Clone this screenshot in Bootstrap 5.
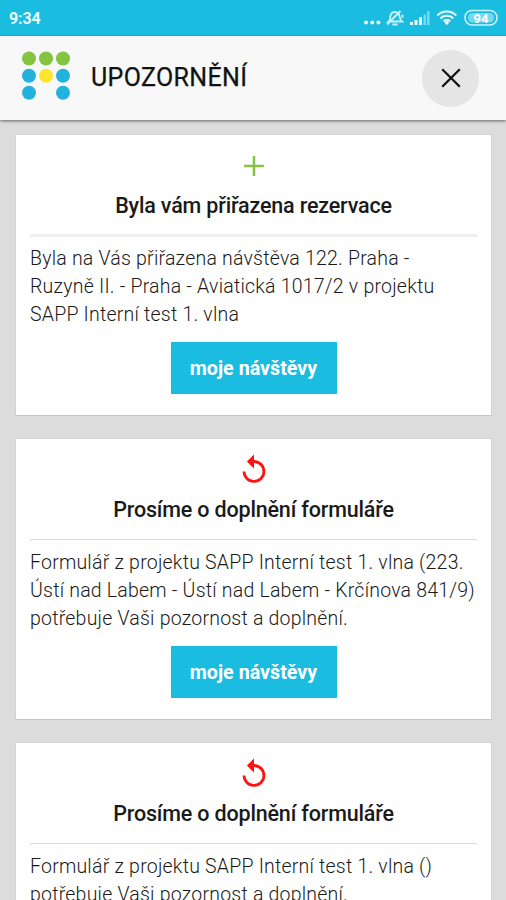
<!DOCTYPE html>
<html lang="cs">
<head>
<meta charset="utf-8">
<meta name="viewport" content="width=device-width, initial-scale=1">
<title>Upozornění</title>
<link href="https://cdn.jsdelivr.net/npm/bootstrap@5.3.0/dist/css/bootstrap.min.css" rel="stylesheet">
<style>
html, body { height: 100%; overflow: hidden; }
body { font-family: Roboto, "Noto Sans", sans-serif; background: #dcdcdc; color: #222; }
svg { display: block; flex: none; }
.status-bar { height: 36px; background: #1abce0; color: #e9fbff; padding: 0 8px 0 9px; }
.clock { font-size: 16px; font-weight: 700; line-height: 36px; letter-spacing: -.1px; padding-top: 1px; }
.app-header { height: 84px; background: #f8f8f8; padding: 0 27px 0 21px; box-shadow: 0 1px 3px rgba(0,0,0,.55); }
.app-title { font-size: 25px; font-weight: 400; line-height: 30px; color: #111; margin: 0 0 0 20px; letter-spacing: .35px; -webkit-text-stroke: .25px #111; }
.close-btn { width: 57px; height: 57px; background: #e5e5e5; color: #111; }
.screen { height: 100vh; overflow: hidden; }
.notices { padding: 14px 14px 0 15px; gap: 22px; }
.notice { height: 282px; flex: none; border: 1px solid #d2d2d2; border-bottom-color: #c6c6c6; border-radius: 0; padding: 14px 14px 0; }
.notice-title { font-size: 21.5px; font-weight: 500; line-height: 28px; color: #1a1a1a; margin: 9px 0 14px; white-space: nowrap; letter-spacing: -.17px; }
.rule { height: 3px; background: #efefef; margin-bottom: 8px; }
.rule-thin { height: 1px; background: #dcdcdc; margin: 1px 0 9px; }
.notice-text { font-size: 19.5px; font-weight: 300; line-height: 28px; color: #1a1a1a; margin: 0 0 13px; white-space: nowrap; letter-spacing: .22px; }
.visits-btn { width: 166px; height: 52px; background: #1abce0; border: 0; border-radius: 0; font-size: 19.7px; font-weight: 700; padding: 1px 0 0; }
.visits-btn:hover { background: #12a8ca; }
</style>
<script src="https://cdn.jsdelivr.net/npm/bootstrap@5.3.0/dist/js/bootstrap.bundle.min.js"></script>
</head>
<body>
<svg width="0" height="0" class="d-none">
  <symbol id="replay" viewBox="0 0 24 24"><path fill="#f11" d="M12 5V1L7 6l5 5V7c3.310 0 6 2.690 6 6s-2.690 6-6 6-6-2.690-6-6H4c0 4.420 3.580 8 8 8s8-3.580 8-8-3.580-8-8-8z"/></symbol>
  <symbol id="plus" viewBox="0 0 24 24"><path fill="#84c441" d="M19 12.900h-6.100V19h-1.800v-6.100H5v-1.800h6.100V5h1.800v6.100H19z"/></symbol>
</svg>
<div class="screen">
<div class="status-bar d-flex justify-content-between">
  <div class="clock">9:34</div>
  <svg width="138" height="36" viewBox="360 0 138 36" fill="none" stroke="#c9f3fc">
    <g fill="#e9fbff" stroke="none"><circle cx="366" cy="22.500" r="2"/><circle cx="372.200" cy="22.500" r="2"/><circle cx="378.400" cy="22.500" r="2"/></g>
    <g stroke-width="1.800">
      <path d="M388.500 21.500c1.800-1.500 1.500-3.500 2-6 1.500-5 8-4.500 9 .5 .3 2 .5 4 2.500 5.500zM392.500 24.500h5M387 24.500L400.500 11"/>
      <path d="M402.500 14.500v3.500"/>
    </g>
    <g fill="#e9fbff" stroke="none"><path d="M410 22h3v3h-3zM414.500 20h3v5h-3zM419 17h3v8h-3z"/><path fill="#76d9ef" d="M423.500 14.500h2.500V25h-2.500zM427 11h2.500v14H427z"/></g>
    <g stroke="#e9fbff" stroke-width="2"><path d="M437.300 15.500a13.300 13.300 0 0 1 19 0M440.300 18.500a9 9 0 0 1 13 0M443.300 21.300a5 5 0 0 1 7 0"/></g>
    <path fill="#e9fbff" stroke="none" d="M444.300 22.300a3.600 3.600 0 0 1 5 0l-2.500 3z"/>
    <rect x="465" y="10.500" width="32" height="14.500" rx="7" stroke-width="1.600"/>
    <rect x="468" y="13" width="26" height="9.500" rx="4.500" fill="#76d9ef" stroke="none"/>
    <text x="481" y="22.500" text-anchor="middle" font-size="13" font-weight="700" fill="#fff" stroke="none">94</text>
  </svg>
</div>
<header class="app-header d-flex align-items-center position-relative">
  <svg width="50" height="56" viewBox="0 -3 50 56">
    <g fill="#84c441"><circle cx="8" cy="5.500" r="7"/><circle cx="25" cy="5.500" r="7"/><circle cx="42" cy="5.500" r="7"/></g>
    <g fill="#23b2de"><circle cx="8" cy="22.700" r="7"/><circle cx="42" cy="22.700" r="7"/><circle cx="8" cy="39.800" r="7"/><circle cx="42" cy="39.800" r="7"/></g>
    <circle cx="25" cy="22.700" r="7" fill="#ffe62e"/>
  </svg>
  <h1 class="app-title">UPOZORNĚNÍ</h1>
  <button type="button" class="close-btn btn rounded-circle border-0 p-0 ms-auto d-flex align-items-center justify-content-center" aria-label="Zavřít">
    <svg width="20" height="20" viewBox="0 0 20 20" stroke="currentColor" stroke-width="2.300"><path d="M1.200 1.200l17.600 17.600M18.800 1.200L1.200 18.800"/></svg>
  </button>
</header>
<main class="notices d-flex flex-column">
  <article class="notice card">
    <svg class="mx-auto" width="34" height="34"><use href="#plus"/></svg>
    <h2 class="notice-title text-center">Byla vám přiřazena rezervace</h2>
    <div class="rule"></div>
    <p class="notice-text">Byla na Vás přiřazena návštěva 122. Praha -<br>Ruzyně II. - Praha - Aviatická 1017/2 v projektu<br>SAPP Interní test 1. vlna</p>
    <button type="button" class="visits-btn btn btn-info text-white mx-auto">moje návštěvy</button>
  </article>
  <article class="notice card">
    <svg class="mx-auto" width="34" height="34"><use href="#replay"/></svg>
    <h2 class="notice-title text-center">Prosíme o doplnění formuláře</h2>
    <div class="rule rule-thin"></div>
    <p class="notice-text">Formulář z projektu SAPP Interní test 1. vlna (223.<br>Ústí nad Labem - Ústí nad Labem - Krčínova 841/9)<br>potřebuje Vaši pozornost a doplnění.</p>
    <button type="button" class="visits-btn btn btn-info text-white mx-auto">moje návštěvy</button>
  </article>
  <article class="notice card">
    <svg class="mx-auto" width="34" height="34"><use href="#replay"/></svg>
    <h2 class="notice-title text-center">Prosíme o doplnění formuláře</h2>
    <div class="rule rule-thin"></div>
    <p class="notice-text">Formulář z projektu SAPP Interní test 1. vlna ()<br>potřebuje Vaši pozornost a doplnění.</p>
  </article>
</main>
</div>
</body>
</html>
